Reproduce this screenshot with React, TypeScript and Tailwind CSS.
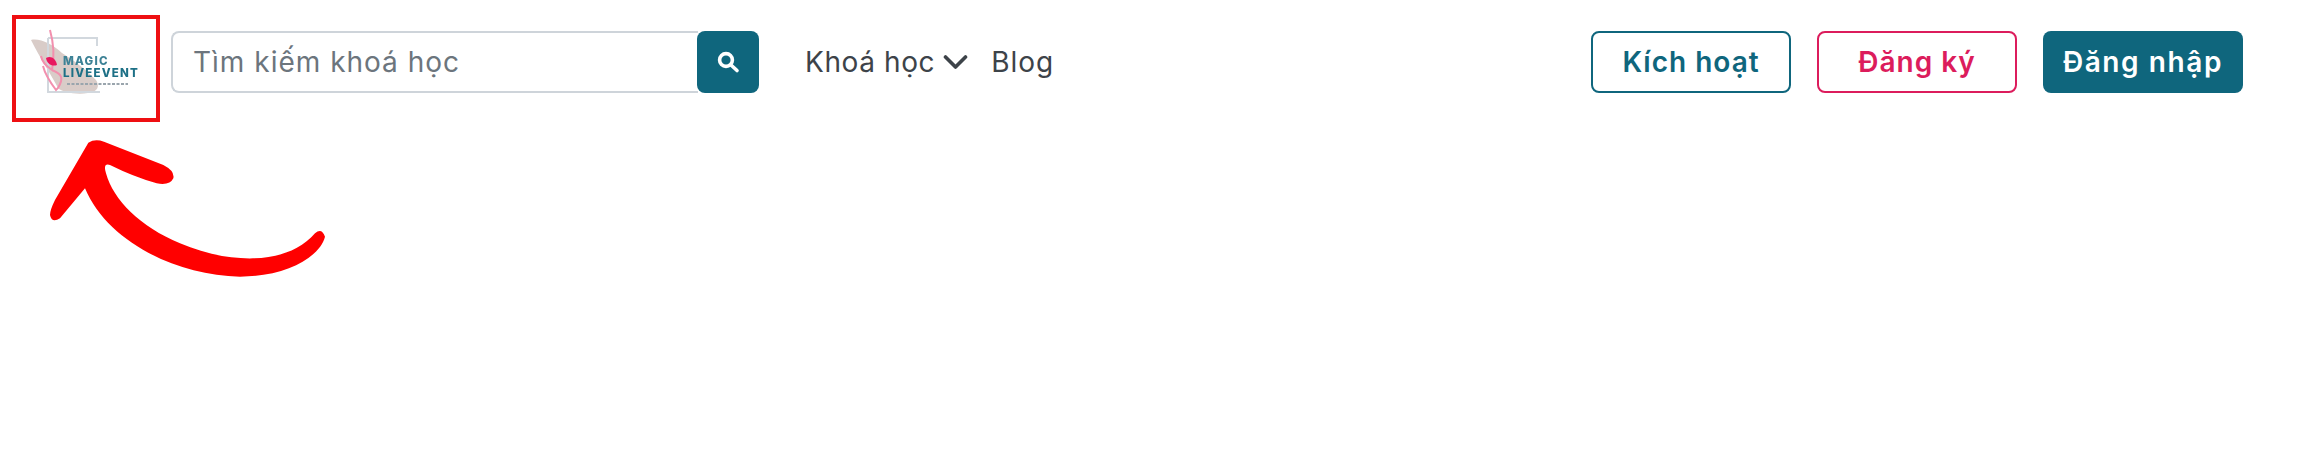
import React from "react";

function Logo() {
  return (
    <div className="w-[148px] h-[107px] border-[4px] border-[#ee0f12] bg-white shrink-0">
      <svg width="140" height="99" viewBox="16 19 140 99" className="blur-[0.7px]">
        <path d="M31 40 C40 38 52 44 62 53 C76 62 84 68 96 80 C100 86 98 92 88 93 C76 95 62 92 58 88 C52 76 40 58 31 40 Z" fill="#d9ccc8" />
        <path d="M48 38 H97 V46 M48 38 V92 H100" fill="none" stroke="#d2d8de" strokeWidth="2" />
        <path d="M50 30 C55 48 54 60 52 70 C46 66 42 62 41 56 M52 70 C62 74 64 78 58 88 L56 90 C50 82 45 74 43 66" fill="none" stroke="#f290ae" strokeWidth="2" />
        <path d="M46 58 C51 55 56 59 57 65 C52 67 47 64 46 58 Z" fill="#e8185e" />
        <text x="63" y="65" fontFamily="Inter, sans-serif" fontWeight="800" fontSize="11.5" letterSpacing="1.2" fill="#3d8296">MAGIC</text>
        <text x="63" y="77" fontFamily="Inter, sans-serif" fontWeight="800" fontSize="11.5" letterSpacing="1.2" fill="#1d7086">LIVEEVENT</text>
        <line x1="67" y1="84" x2="128" y2="84" stroke="#9aa5ad" strokeWidth="2" strokeDasharray="3 1.5" />
      </svg>
    </div>
  );
}

function Arrow() {
  return (
    <svg className="absolute left-0 top-0" width="340" height="290" viewBox="0 0 1020 870">
      <path
        d="M265 428 Q285 415 312 425 L490 495 Q525 513 520 535 Q510 557 470 550 Q400 530 330 495 Q308 488 318 520 C340 600 420 680 540 730 C680 790 860 800 945 700 Q965 682 975 710 C960 770 860 830 720 830 C520 825 320 720 255 565 L180 655 Q155 670 150 645 Q150 630 165 600 Z"
        fill="#ff0000"
      />
    </svg>
  );
}

export default function App() {
  return (
    <div className="relative w-[2304px] h-[455px] bg-white font-['Inter',sans-serif] overflow-hidden">
      <header className="flex items-start pt-[15px] pl-[12px] pr-[61px]">
        <Logo />
        <div className="mt-[16px] ml-[11px] flex h-[62px] w-[588px]">
          <div className="flex flex-1 items-center rounded-l-[8px] border-2 border-r-0 border-[#ced4da] pl-[20px] text-[28px] text-[#6c757d] tracking-[1px]">
            Tìm kiếm khoá học
          </div>
          <div className="flex w-[62px] items-center justify-center rounded-[8px] bg-[#0f667d] -ml-[1px]">
            <svg width="24" height="24" viewBox="0 0 24 24" fill="none" stroke="white" strokeWidth="3.6" strokeLinecap="round">
              <circle cx="10" cy="10" r="6.4" />
              <path d="M15 15 L21 20.5" />
            </svg>
          </div>
        </div>
        <nav className="mt-[16px] ml-[46px] flex h-[62px] items-center text-[28px] text-[#3d4349]">
          <span className="tracking-[0.6px]">Khoá học</span>
          <svg className="ml-[8px]" width="25" height="16" viewBox="0 0 25 16" fill="none" stroke="#3d4349" strokeWidth="3.6" strokeLinecap="round" strokeLinejoin="round">
            <path d="M2.5 3 L12.5 13 L22.5 3" />
          </svg>
          <span className="ml-[23px] tracking-[1px]">Blog</span>
        </nav>
        <div className="mt-[16px] ml-auto flex gap-[26px]">
          <button className="h-[62px] w-[200px] rounded-[8px] border-2 border-[#0f667d] text-[28px] font-semibold text-[#0f667d] tracking-[1px]">Kích hoạt</button>
          <button className="h-[62px] w-[200px] rounded-[8px] border-2 border-[#dc1c5c] text-[28px] font-semibold text-[#dc1c5c] tracking-[1px]">Đăng ký</button>
          <button className="h-[62px] w-[200px] rounded-[8px] bg-[#0f667d] text-[28px] font-semibold text-white tracking-[1.6px]">Đăng nhập</button>
        </div>
      </header>
      <Arrow />
    </div>
  );
}
